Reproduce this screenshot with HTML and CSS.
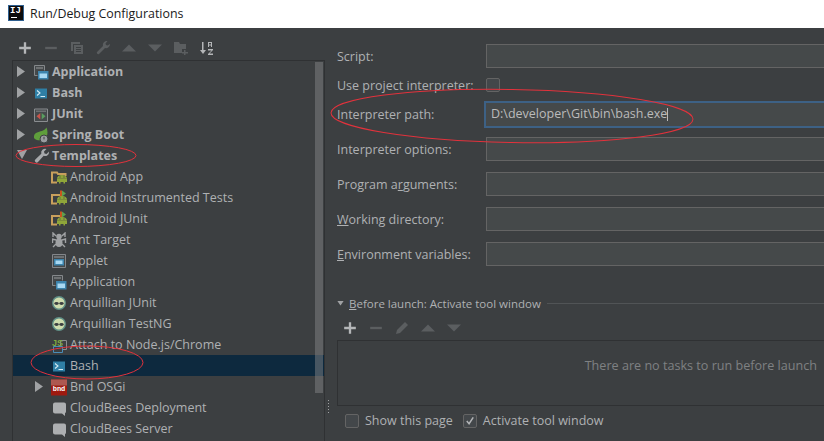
FILE: index.html
```html
<!DOCTYPE html>
<html lang="en">

<head>
    <meta charset="UTF-8">
    <meta name="viewport" content="width=device-width, initial-scale=1.0">
    <title>Run/Debug Configurations</title>
    <link rel="stylesheet" href="styles.css">
</head>

<body>

    <svg class="sprites" width="0" height="0">
        <symbol id="i-app" viewBox="0 0 16 16" overflow="visible">
            <path d="M0.500 1.500h10v10h-10z" fill="#45494b" stroke="#85888b"/><path d="M2 3h7v2H2z" fill="#6e7173"/>
            <path d="M3.500 6.500h11v9h-11z" fill="#3c3f41"/><path d="M4 7h10.500v8.500H4z" fill="#3d84ad"/><path d="M5.500 9.500h7.500v4.500H5.500z" fill="#a8d8f2"/>
        </symbol>
        <symbol id="i-applet" viewBox="0 0 16 16">
            <path d="M0.500 1.500h13v13h-13z" fill="#45494b" stroke="#83868a"/><path d="M2 3h10v2H2z" fill="#6e7173"/>
            <path d="M2 6h10v6.500H2z" fill="#3d84ad"/><path d="M3.500 7.500h7v3.500h-7z" fill="#a8d8f2"/>
        </symbol>
        <symbol id="i-bash" viewBox="0 0 16 16">
            <path d="M1 3.500h12v10H1z" fill="#2f7fa5"/><path d="M3 5.500l3 2.500-3 2.500" fill="none" stroke="#d5ecf5" stroke-width="1.100"/><path d="M6.500 11h4.500v1H6.500z" fill="#d5ecf5"/>
        </symbol>
        <symbol id="i-junit" viewBox="0 0 16 16">
            <path d="M0.500 3h13v12.500h-13z" fill="#45494b" stroke="#8a8d90"/><path d="M2 4.500h10v1.500H2z" fill="#6e7173"/>
            <path d="M6.300 7v6.500L2.500 10.200z" fill="#c9544a"/><path d="M7.700 7v6.500l3.800-3.300z" fill="#5a9e5f"/>
        </symbol>
        <symbol id="i-spring" viewBox="0 0 16 16">
            <path d="M0 11C-1 5 6 5 9 3.500c2-.8 3.500-3 3.500-3 2 5 1 10-3 12-3 1.500-8 1-9.500-1.500z" fill="#5f9e3c"/>
            <circle cx="10" cy="12" r="4" fill="#9a9da0" stroke="#3c3f41"/><path d="M10 9.800v2.600" stroke="#3c3f41"/>
        </symbol>
        <symbol id="i-wrench" viewBox="0 0 16 16">
            <path d="M15 3.500a4 4 0 0 1-5.300 4.300L4 14a1.800 1.800 0 0 1-2.700-2.500l6-5.700A4 4 0 0 1 12.500 1L10 3.500l.5 2 2 .5z" fill="#a7a9ab"/>
        </symbol>
        <symbol id="i-android" viewBox="0 0 16 16" overflow="visible">
            <path d="M0 14V3.500h5l1 1.500h7.500v2" fill="none" stroke="#c9a05c" stroke-width="2"/><path d="M-1 12.500h6v2h-6z" fill="#c9a05c"/>
            <path d="M5 9.500a5 3.500 0 0 1 10 0z" fill="#8fa63a"/><path d="M5 9.500h10v3.500H13v1.500h-1.500V13h-3v1.500H7V13H5z" fill="#8fa63a"/>
            <path d="M7.500 7.500h1v1h-1zM11.500 7.500h1v1h-1z" fill="#3c3f41"/>
        </symbol>
        <symbol id="i-androidtest" viewBox="0 0 16 16" overflow="visible">
            <path d="M0 14V5h8" fill="none" stroke="#c9a05c" stroke-width="2"/><path d="M-1 12.500h6v2h-6z" fill="#c9a05c"/>
            <path d="M8 .500h2v6.500H8z" fill="#c9541f"/><path d="M10 .500l4 3-4 3z" fill="#5fa04e"/>
            <path d="M5 9.500a5 3.500 0 0 1 10 0z" fill="#8fa63a"/><path d="M5 9.500h10v3.500H13v1.500h-1.500V13h-3v1.500H7V13H5z" fill="#8fa63a"/>
            <path d="M7.500 7.500h1v1h-1zM11.500 7.500h1v1h-1z" fill="#3c3f41"/>
        </symbol>
        <symbol id="i-ant" viewBox="0 0 16 16">
            <ellipse cx="7" cy="10.500" rx="3.500" ry="4.500" fill="#a0a2a4"/><circle cx="7" cy="4.500" r="2.800" fill="#a0a2a4"/>
            <path d="M4 4L1 1v4M10 4l3-3v4M4 8L.5 7v4M10 8l3.500-1v4M4 12l-3 3M10 12l3 3" fill="none" stroke="#a0a2a4" stroke-width="1.400"/>
        </symbol>
        <symbol id="i-arq" viewBox="0 0 16 16">
            <circle cx="7" cy="8" r="6.300" fill="#cfdcae" stroke="#5f8f87" stroke-width="1.400"/>
            <ellipse cx="4.500" cy="8.500" rx="2.200" ry="1.400" fill="#3c3f41"/><ellipse cx="9.500" cy="8.500" rx="2.200" ry="1.400" fill="#3c3f41"/>
        </symbol>
        <symbol id="i-cloud" viewBox="0 0 16 16">
            <path d="M3 2.500h9a2 2 0 0 1 2 2v7a2 2 0 0 1-1 1.700V16l-3-2.500H3a2 2 0 0 1-2-2v-7a2 2 0 0 1 2-2z" fill="#adafb1"/>
        </symbol>
        <symbol id="i-plus" viewBox="0 0 12 12"><path d="M5 1h2v4h4v2H7v4H5V7H1V5h4z"/></symbol>
        <symbol id="i-minus" viewBox="0 0 12 12"><path d="M1 5h10v2H1z"/></symbol>
        <symbol id="i-up" viewBox="0 0 12 12"><path d="M0 9l6-6 6 6z"/></symbol>
        <symbol id="i-down" viewBox="0 0 12 12"><path d="M0 3l6 6 6-6z"/></symbol>
    </svg>

    <header class="titlebar">
        <div class="logo"><span>IJ</span></div>
        <span>Run/Debug Configurations</span>
    </header>

    <main class="dialog">
        <section class="left">
            <div class="toolbar">
                <svg class="tool on"><use href="#i-plus"/></svg>
                <svg class="tool"><use href="#i-minus"/></svg>
                <svg class="tool" viewBox="0 0 14 14"><path d="M1 1h9v2H3v7H1zM4 4h9v9H4zM6 6v1h5V6zM6 8v1h5V8zM6 10v1h5v-1z" fill-rule="evenodd"/></svg>
                <svg class="tool" viewBox="0 0 14 14"><path d="M14 3a4 4 0 0 1-5 4L3 13a1.500 1.500 0 0 1-2-2l6-6a4 4 0 0 1 4.500-5L9.500 2.500l.5 1.500 1.500.5z"/></svg>
                <svg class="tool"><use href="#i-up"/></svg>
                <svg class="tool"><use href="#i-down"/></svg>
                <svg class="tool" viewBox="0 0 14 14"><path d="M0 1h5l1 2h6v5H8v4H0zM10 9h1.500v2H14v1.500h-2.500V14H10v-1.500H8V11h2z"/></svg>
                <svg class="tool on" viewBox="0 0 14 14"><path d="M2 1h1.500v8H6l-3 4-3-4h2z"/><path d="M8 1h4v5h-1V4.500H9V6H8zm1 1v1.500h2V2zM8 8h5v1l-3.500 3.500H13V14H8v-1l3.500-3.500H8z"/></svg>
            </div>
            <div class="tree">
                <div class="row top"><i class="arrow"></i><svg class="icon"><use href="#i-app"/></svg>Application</div>
                <div class="row top"><i class="arrow"></i><svg class="icon"><use href="#i-bash"/></svg>Bash</div>
                <div class="row top"><i class="arrow"></i><svg class="icon"><use href="#i-junit"/></svg>JUnit</div>
                <div class="row top"><i class="arrow"></i><svg class="icon"><use href="#i-spring"/></svg>Spring Boot</div>
                <div class="row top"><i class="arrow open"></i><svg class="icon"><use href="#i-wrench"/></svg>Templates</div>
                <div class="row child"><svg class="icon"><use href="#i-android"/></svg>Android App</div>
                <div class="row child"><svg class="icon"><use href="#i-androidtest"/></svg>Android Instrumented Tests</div>
                <div class="row child"><svg class="icon"><use href="#i-androidtest"/></svg>Android JUnit</div>
                <div class="row child"><svg class="icon"><use href="#i-ant"/></svg>Ant Target</div>
                <div class="row child"><svg class="icon"><use href="#i-applet"/></svg>Applet</div>
                <div class="row child"><svg class="icon"><use href="#i-app"/></svg>Application</div>
                <div class="row child"><svg class="icon"><use href="#i-arq"/></svg>Arquillian JUnit</div>
                <div class="row child"><svg class="icon"><use href="#i-arq"/></svg>Arquillian TestNG</div>
                <div class="row child"><svg class="icon" viewBox="0 0 16 16"><path d="M8.500 3.500h6v9h-6z" fill="none" stroke="#8a8d90"/><path d="M1.500 9.500h9v6h-9z" fill="#3c3f41" stroke="#4a8db8"/><text x="0" y="8.500" class="js">JS</text></svg>Attach to Node.js/Chrome</div>
                <div class="row child selected"><svg class="icon"><use href="#i-bash"/></svg>Bash</div>
                <div class="row nested"><i class="arrow"></i><svg class="icon" viewBox="0 0 16 16" overflow="visible"><path d="M-1 0.500h16v16h-16z" fill="#9e1a10"/><path d="M-1 0.500h16v6h-16z" fill="#ad5850"/><text x="7" y="11.500" class="bnd">bnd</text></svg>Bnd OSGi</div>
                <div class="row child"><svg class="icon"><use href="#i-cloud"/></svg>CloudBees Deployment</div>
                <div class="row child"><svg class="icon"><use href="#i-cloud"/></svg>CloudBees Server</div>
                <div class="thumb"></div>
            </div>
        </section>

        <div class="splitter"></div>

        <section class="right">
            <div class="field script"><label>Script:</label><div class="input"></div></div>
            <div class="field check-row"><label>Use project interpreter:</label><div class="box"></div></div>
            <div class="field path"><label>Interpreter path:</label><div class="input focused">D:\developer\Git\bin\bash.exe<i class="caret"></i></div></div>
            <div class="field"><label>Interpreter options:</label><div class="input"></div></div>
            <div class="field"><label>Program a<u>r</u>guments:</label><div class="input"></div></div>
            <div class="field"><label><u>W</u>orking directory:</label><div class="input"></div></div>
            <div class="field"><label><u>E</u>nvironment variables:</label><div class="input"></div></div>

            <div class="before">
                <i class="arrow-small"></i>
                <span><u>B</u>efore launch: Activate tool window</span>
                <div class="rule"></div>
            </div>
            <div class="toolbar small">
                <svg class="tool on"><use href="#i-plus"/></svg>
                <svg class="tool"><use href="#i-minus"/></svg>
                <svg class="tool" viewBox="0 0 14 14"><path d="M10 1l3 3-8 8-4 1 1-4z"/></svg>
                <svg class="tool"><use href="#i-up"/></svg>
                <svg class="tool"><use href="#i-down"/></svg>
            </div>
            <div class="tasks">There are no tasks to run before launch</div>
            <div class="options">
                <div class="box"></div><span>Show this page</span>
                <div class="box checked"><svg viewBox="0 0 13 13"><path d="M3 6.500l2.500 3L10 2.500" fill="none" stroke="#b4b6b8" stroke-width="1.600"/></svg></div><span>Activate tool window</span>
            </div>
        </section>

        <!-- hand drawn red circles on top of the screenshot -->
        <svg class="marks" viewBox="0 0 824 413">
            <ellipse cx="76" cy="127.500" rx="60" ry="11"/>
            <ellipse cx="87" cy="334.500" rx="56" ry="16.500"/>
            <ellipse cx="512" cy="88" rx="181" ry="26.500" transform="rotate(1 512 88)"/>
        </svg>
    </main>

</body>

</html>
```

FILE: styles.css
```css
* {
    box-sizing: border-box;
}

html,
body {
    margin: 0;
    height: 441px;
    overflow: hidden;
}

body {
    font-family: 'Open Sans', 'Noto Sans', sans-serif;
    font-size: 12.5px;
    background-color: #3c3f41;
    color: #afb1b3;
}

.sprites {
    position: absolute;
}

.titlebar {
    height: 28px;
    background-color: #fff;
    color: #1a1a1a;
    font-size: 12.4px;
    display: flex;
    align-items: center;
    gap: 6px;
    padding: 0 0 2px 8px;
}

.logo {
    width: 16px;
    height: 16px;
    background-color: #0c0c0c;
    border: 1px solid #2f5f8f;
    color: #fff;
    font: bold 9px 'Liberation Mono', monospace;
    line-height: 10px;
    padding-left: 1px;
    position: relative;
}

.logo::after {
    content: '';
    position: absolute;
    left: 2px;
    bottom: 2px;
    width: 6px;
    height: 1px;
    background-color: #fff;
}

.dialog {
    position: relative;
    display: flex;
    height: 413px;
}

.left {
    width: 325px;
    flex-shrink: 0;
    padding: 0 0 0 12px;
}

.toolbar {
    height: 32px;
    display: flex;
    align-items: center;
    gap: 12px;
    padding: 8px 0 0 6px;
}

.tool {
    width: 14px;
    height: 14px;
    flex-shrink: 0;
    fill: #5b5e60;
}

.tool.on {
    fill: #b4b6b8;
}

.tree {
    position: relative;
    height: 381px;
    border: 1px solid #2f3133;
    border-bottom: 0;
    overflow: hidden;
}

.row {
    height: 21px;
    display: flex;
    align-items: center;
    white-space: nowrap;
}

.row.top {
    padding-left: 4px;
    font-weight: 700;
}

.row.child {
    padding-left: 39px;
}

.row.nested {
    padding-left: 22px;
}

.row.selected {
    background-color: #0d293e;
}

.arrow {
    width: 17px;
    height: 11px;
    flex-shrink: 0;
    background-color: #a0a2a4;
    clip-path: polygon(0 0, 8px 50%, 0 100%);
}

.arrow.open {
    clip-path: polygon(0 0, 10px 0, 5px 9px);
}

.icon {
    width: 16px;
    height: 16px;
    flex-shrink: 0;
    margin-right: 2px;
    overflow: visible;
}

.js {
    font: bold 9px 'Liberation Sans', sans-serif;
    fill: #7fa83f;
}

.bnd {
    font: bold 7px 'Liberation Mono', monospace;
    fill: #fff;
    text-anchor: middle;
}

.thumb {
    position: absolute;
    top: 1px;
    right: 1px;
    width: 8px;
    height: 331px;
    background-color: rgba(130, 132, 134, 0.5);
}

.splitter {
    position: relative;
    width: 12px;
    flex-shrink: 0;
}

.splitter::after {
    content: '';
    position: absolute;
    left: 2px;
    top: 371px;
    width: 3px;
    height: 15px;
    background-image: radial-gradient(#a0a2a4 0.7px, transparent 0.9px);
    background-size: 3px 3px;
}

.right {
    flex: 1;
    min-width: 0;
    padding-top: 16px;
    white-space: nowrap;
}

.field {
    height: 24px;
    margin-bottom: 11px;
    display: flex;
    align-items: center;
}

.field label {
    width: 149px;
    flex-shrink: 0;
}

.field.script,
.field.check-row {
    margin-bottom: 5px;
}

.input {
    flex: 1;
    height: 24px;
    margin-right: -20px;
    background-color: #45494a;
    border: 1px solid #646464;
    color: #bbb;
    padding-left: 4px;
    line-height: 22px;
}

.input.focused {
    border: 2px solid #3d6185;
    line-height: 22px;
    height: 27px;
    margin-left: -2px;
    padding-left: 5px;
}

.caret {
    display: inline-block;
    width: 1px;
    height: 13px;
    background-color: #bbb;
    vertical-align: -3px;
}

.box {
    width: 14px;
    height: 14px;
    flex-shrink: 0;
    background-color: #43474a;
    border: 1px solid #646464;
    border-radius: 2px;
}

.box svg {
    display: block;
    width: 12px;
    height: 12px;
}

.before {
    display: flex;
    align-items: center;
    height: 16px;
    margin-top: 29px;
    font-size: 11.500px;
}

.arrow-small {
    width: 12px;
    height: 5px;
    flex-shrink: 0;
    background-color: #a0a2a4;
    clip-path: polygon(0 0, 7px 0, 3.500px 100%);
}

.rule {
    flex: 1;
    height: 1px;
    margin-left: 6px;
    background-color: #515456;
}

.toolbar.small {
    height: 29px;
    padding: 5px 0 0 6px;
}

.tasks {
    height: 66px;
    border: 1px solid #2f3133;
    border-right: 0;
    text-align: right;
    padding-right: 7px;
    line-height: 50px;
    font-size: 12.6px;
    color: #7f8183;
}

.options {
    display: flex;
    align-items: center;
    gap: 6px;
    height: 29px;
    padding-left: 8px;
}

.options span {
    margin-right: 4px;
}

.marks {
    position: absolute;
    left: 0;
    top: 0;
    width: 824px;
    height: 413px;
    pointer-events: none;
}

.marks ellipse {
    fill: none;
    stroke: #e2323c;
    stroke-width: 1;
}
```
